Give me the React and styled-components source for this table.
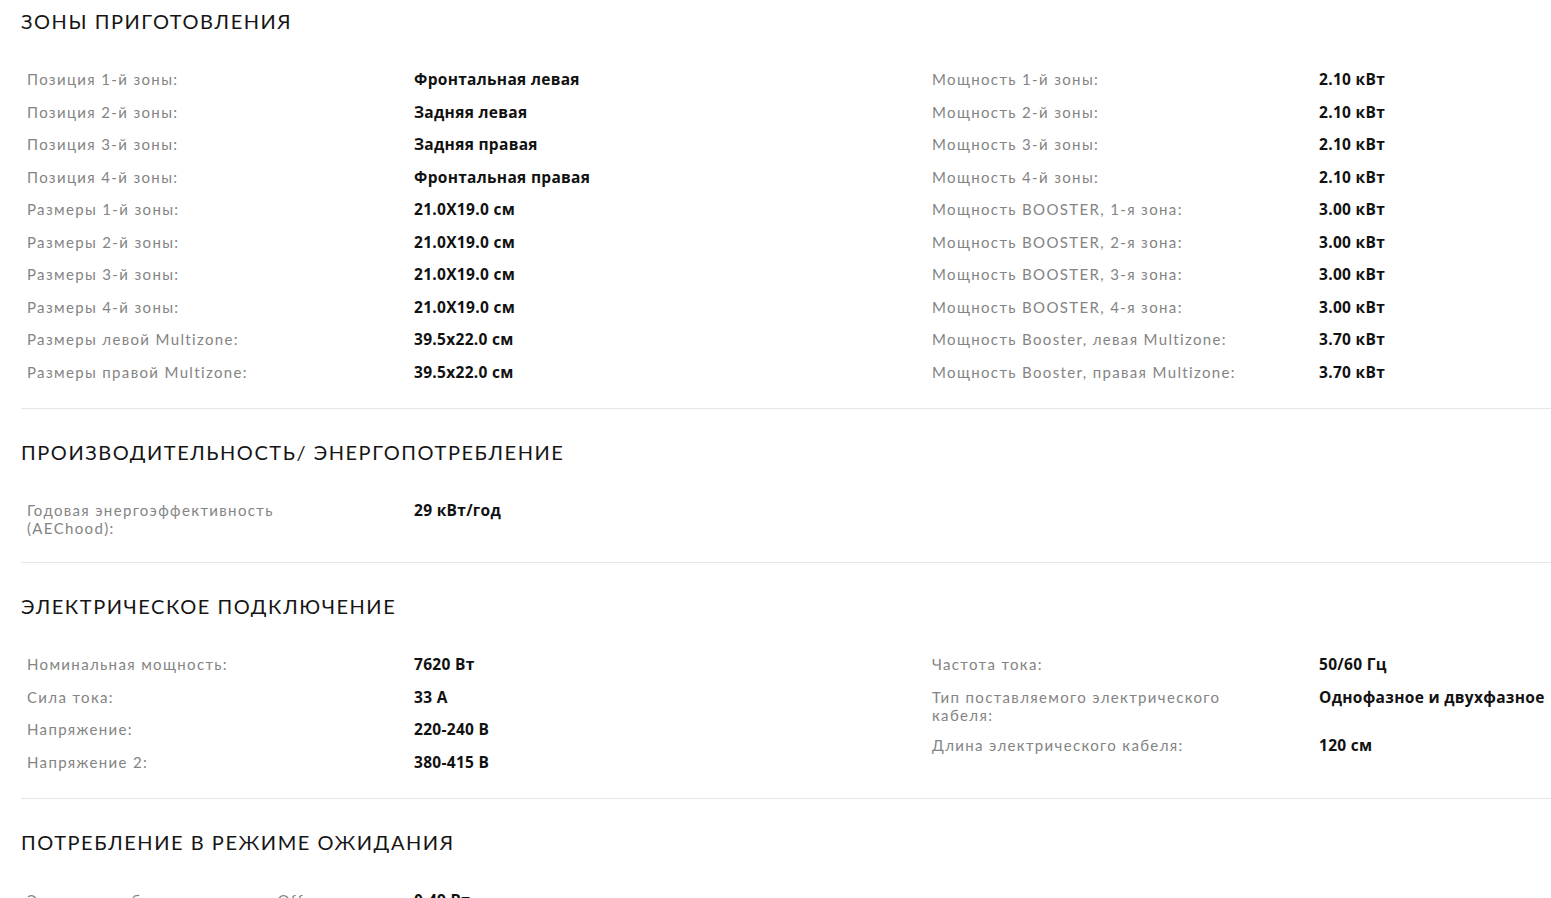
import React from 'react';
import styled, { createGlobalStyle } from 'styled-components';

const sections = [
    {
        title: 'Зоны приготовления',
        columns: [
            [
                ['Позиция 1-й зоны:', 'Фронтальная левая'],
                ['Позиция 2-й зоны:', 'Задняя левая'],
                ['Позиция 3-й зоны:', 'Задняя правая'],
                ['Позиция 4-й зоны:', 'Фронтальная правая'],
                ['Размеры 1-й зоны:', '21.0X19.0 см'],
                ['Размеры 2-й зоны:', '21.0X19.0 см'],
                ['Размеры 3-й зоны:', '21.0X19.0 см'],
                ['Размеры 4-й зоны:', '21.0X19.0 см'],
                ['Размеры левой Multizone:', '39.5x22.0 см'],
                ['Размеры правой Multizone:', '39.5x22.0 см'],
            ],
            [
                ['Мощность 1-й зоны:', '2.10 кВт'],
                ['Мощность 2-й зоны:', '2.10 кВт'],
                ['Мощность 3-й зоны:', '2.10 кВт'],
                ['Мощность 4-й зоны:', '2.10 кВт'],
                ['Мощность BOOSTER, 1-я зона:', '3.00 кВт'],
                ['Мощность BOOSTER, 2-я зона:', '3.00 кВт'],
                ['Мощность BOOSTER, 3-я зона:', '3.00 кВт'],
                ['Мощность BOOSTER, 4-я зона:', '3.00 кВт'],
                ['Мощность Booster, левая Multizone:', '3.70 кВт'],
                ['Мощность Booster, правая Multizone:', '3.70 кВт'],
            ],
        ],
    },
    {
        title: 'Производительность/ энергопотребление',
        columns: [[['Годовая энергоэффективность (AEChood):', '29 кВт/год']], []],
    },
    {
        title: 'Электрическое подключение',
        columns: [
            [
                ['Номинальная мощность:', '7620 Вт'],
                ['Сила тока:', '33 A'],
                ['Напряжение:', '220-240 В'],
                ['Напряжение 2:', '380-415 В'],
            ],
            [
                ['Частота тока:', '50/60 Гц'],
                ['Тип поставляемого электрического кабеля:', 'Однофазное и двухфазное'],
                ['Длина электрического кабеля:', '120 см'],
            ],
        ],
    },
    {
        title: 'Потребление в режиме ожидания',
        columns: [[['Энергопотребление в режиме Off:', '0.49 Вт']], []],
        last: true,
    },
];

function App() {
    return (
        <>
            <GlobalStyle />
            <Page>
                {sections.map((section, i) => (
                    <Section key={i} $first={i === 0} $last={section.last}>
                        <Title>{section.title}</Title>
                        <Columns>
                            {section.columns.map((col, j) => (
                                <Column key={j}>
                                    {col.map(([label, value], k) => (
                                        <Row key={k}>
                                            <Label>{label}</Label>
                                            <Value>{value}</Value>
                                        </Row>
                                    ))}
                                </Column>
                            ))}
                        </Columns>
                    </Section>
                ))}
            </Page>
        </>
    );
}

export default App;

const GlobalStyle = createGlobalStyle`
    html, body {
        margin: 0;
        padding: 0;
        background: #fff;
        overflow: hidden;
    }
    body {
        font-family: Lato, "Open Sans", sans-serif;
    }
`;

const Page = styled.div`
    padding-left: 21px;
    height: 898px;
    overflow: hidden;
`;

const Section = styled.section`
    padding-top: ${(props) => (props.$first ? '9px' : '31px')};
    padding-bottom: 20px;
    border-bottom: ${(props) => (props.$last ? 'none' : '1px solid #e6e6e6')};
`;

const Title = styled.h2`
    margin: 0 0 30px;
    font-family: Lato, sans-serif;
    font-weight: 400;
    font-size: 20px;
    line-height: 24px;
    letter-spacing: 1.55px;
    text-transform: uppercase;
    color: #151515;
`;

const Columns = styled.div`
    display: grid;
    grid-template-columns: 905px 1fr;
`;

const Column = styled.div`
    display: flex;
    flex-direction: column;
`;

const Row = styled.div`
    display: grid;
    grid-template-columns: 387px 1fr;
    align-items: baseline;
    padding: 5px 0 5px 6px;
`;

const Label = styled.div`
    max-width: 325px;
    font-family: Lato, sans-serif;
    font-size: 15px;
    line-height: 18px;
    letter-spacing: 1.35px;
    color: #848484;
`;

const Value = styled.div`
    font-family: "Open Sans", sans-serif;
    font-weight: 700;
    font-size: 15.5px;
    line-height: 22.5px;
    letter-spacing: 0.3px;
    color: #111;
    white-space: nowrap;
`;
